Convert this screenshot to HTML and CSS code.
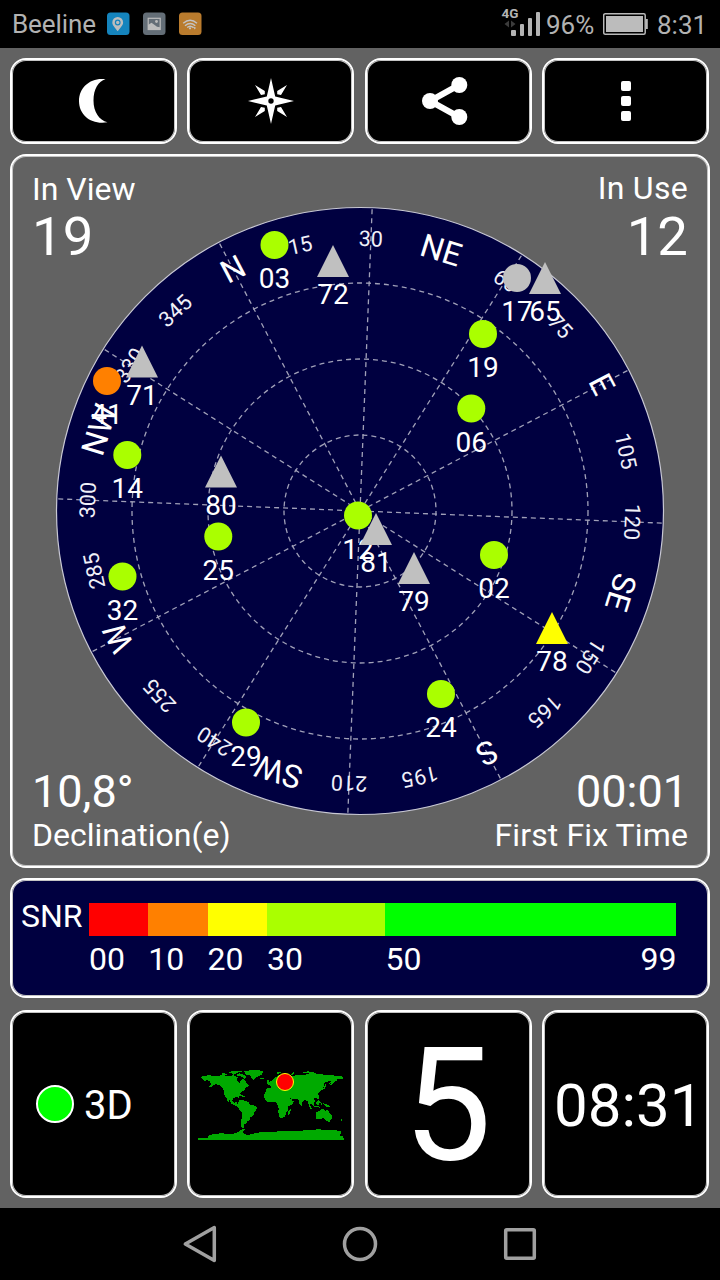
FILE: index.html
```html
<!DOCTYPE html>
<html lang="en">
<head>
<meta charset="utf-8">
<title>GPS Status</title>
<link rel="stylesheet" href="styles.css">
</head>
<body>
<div class="screen">
  <header class="status">
    <span class="carrier">Beeline</span>
    <svg class="notifs" width="96" height="24" viewBox="106 12 96 24">
      <rect x="107" y="12.500" width="22.500" height="22.500" rx="3.500" fill="#1584bd"/>
      <path fill-rule="evenodd" fill="#bdbdbd" d="M117.700 17a5.400 5.400 0 0 0-5.400 5.400c0 3.200 3.300 5.500 5.400 8.900 2.100-3.400 5.400-5.700 5.400-8.900a5.400 5.400 0 0 0-5.400-5.400zm0 2.600a2.900 2.900 0 1 1 0 5.800 2.900 2.900 0 0 1 0-5.800z"/>
      <circle cx="117.700" cy="22.500" r="1.700" fill="#bdbdbd"/>
      <rect x="143" y="12.500" width="22.500" height="22.500" rx="3.500" fill="#646e77"/>
      <rect x="148.200" y="18.300" width="12" height="11.200" fill="none" stroke="#bdbdbd" stroke-width="1.200"/>
      <path fill="#bdbdbd" d="M148 25l3.500-2.200 3.500 2.400 2 1.500 3 .5v2.600h-12z"/>
      <circle cx="156.500" cy="21.500" r="1.400" fill="#bdbdbd"/>
      <rect x="179" y="12.500" width="22.500" height="22.500" rx="3.500" fill="#b97b2d"/>
      <g fill="none" stroke="#c4c4c4" stroke-width="1.400">
        <path d="M183.200 23.200q7-6 13.800 0M185 25.800q5.200-4.500 10.300 0M187.200 27.500q3-2.700 6 0"/>
      </g>
      <circle cx="190" cy="28.300" r="1.100" fill="#c4c4c4"/>
      <path d="M192.500 27l3 1-1.500 1" stroke="#c4c4c4" fill="none"/>
    </svg>
    <svg class="signal" width="40" height="34" viewBox="501 4 40 34">
      <text class="net" x="501.500" y="18">4G</text>
      <path fill="#3c3c3c" d="M509 20.500v7l-4.500-3.500zM511 20.500v7l4.500-3.500z"/>
      <g fill="#b4b4b4">
        <rect x="511" y="30" width="5" height="6" rx="1"/>
        <rect x="520" y="24" width="4" height="12" rx="1"/>
        <rect x="528" y="18" width="4" height="18" rx="1"/>
        <rect x="536" y="12" width="4" height="24" rx="1"/>
      </g>
    </svg>
    <span class="percent">96%</span>
    <svg class="battery" width="46" height="24" viewBox="603 12 46 24">
      <rect x="603.700" y="13.700" width="41.500" height="20.500" rx="1.500" fill="none" stroke="#b9b9b9" stroke-width="1.500"/>
      <rect x="606" y="16" width="37" height="16" fill="#bcbcbc"/>
      <path fill="#b9b9b9" d="M646 19h1.800v10H646z"/>
    </svg>
    <span class="clock">8:31</span>
  </header>

  <main class="app">
    <nav class="row toolbar">
      <button class="card" aria-label="Night mode">
        <svg class="nudge" width="30" height="46" viewBox="78 78 30 46"><path fill="#fff" d="M105.500 79.200C91 77 79 87 79 101s12 24 28.500 21.300C99 120 93.500 112 93.500 100.500S98.500 81 105.500 79.200z"/></svg>
      </button>
      <button class="card" aria-label="Compass">
        <svg width="48" height="48" viewBox="247 77 48 48">
          <path fill="#fff" d="M271 78l4.200 18.500L294 101l-18.800 4.500L271 124l-4.200-18.500L248 101l18.800-4.500z"/>
          <path fill="#fff" d="M255 85l9.800 6v3.300l-3.800.7zM287 85l-9.800 6v3.300l3.800.7zM255 117l9.800-6v-3.300l-3.800-.7zM287 117l-9.800-6v-3.300l3.800-.7z"/>
          <circle cx="271" cy="101" r="2.700"/>
        </svg>
      </button>
      <button class="card" aria-label="Share">
        <svg class="share" width="48" height="50" viewBox="422 76 48 50"><path d="M460 85l-29 16 29 16" fill="none" stroke="#fff" stroke-width="6"/><g fill="#fff"><circle cx="431" cy="101" r="8"/><circle cx="460.300" cy="85" r="8"/><circle cx="460.300" cy="117" r="8"/></g></svg>
      </button>
      <button class="card" aria-label="Menu">
        <svg width="12" height="42" viewBox="0 0 12 42"><g fill="#fff"><rect x="1" y="1" width="10" height="10" rx="2"/><rect x="1" y="16" width="10" height="10" rx="2"/><rect x="1" y="31" width="10" height="10" rx="2"/></g></svg>
      </button>
    </nav>

    <section class="card sky">
      <svg class="dial" viewBox="13 157 694 708">
        <circle cx="360" cy="511" r="303.500" fill="#000040" stroke="#c8c8d4" stroke-width="1.200"/>
        <g id="grid" class="grid">
          <circle cx="360" cy="511" r="76"/><circle cx="360" cy="511" r="152"/><circle cx="360" cy="511" r="228"/>
        </g>
        <g id="bearings" class="bearings"></g>
        <g id="sats" class="sats"></g>
      </svg>
      <div class="corners">
        <div class="pair"><div><p class="label">In View</p><p class="count">19</p></div><div class="right"><p class="label up">In Use</p><p class="count in-use">12</p></div></div>
        <div class="pair"><div><p class="value">10,8°</p><p class="label">Declination(e)</p></div><div class="right"><p class="value">00:01</p><p class="label ttff">First Fix Time</p></div></div>
      </div>
    </section>

    <section class="card snr">
      <span class="snr-name">SNR</span>
      <div class="scale">
        <i class="red"></i><i class="orange"></i><i class="yellow"></i><i class="lime"></i><i class="green"></i>
        <span>00</span><span>10</span><span>20</span><span>30</span><span class="ends"><b>50</b><b>99</b></span>
      </div>
    </section>

    <section class="row tiles">
      <div class="card fix"><i class="dot"></i><span>3D</span></div>
      <div class="card world">
        <svg class="map" width="146" height="72" viewBox="39 57 438 216">
          <g fill="#00aa00" shape-rendering="crispEdges">
            <path d="M39 75l6 6 12-3 12-2 30 2 12-3 18 3 18-2 12 6-4 9 8 8 9-13 9 4 3 9 10 8-10 5-7 9-11 8-5 10 2 8-5-5-13 1-3 9 6 6 8-3 1 7 6 3 2 6 8 3-6 2-12-7-15-7-8-13-2 8-6-13-6-10-1-12-7-12-9-6-11-1-12 8-6-1 8-7-6-5 2-6-12-1-7 2z"/>
            <path d="M111 70l18 1-4 5-14-1zM132 65l20-2 24 0-18 5-12 7-5-5-9 0zM156 73l9-3 12 5 8 6-7 5-10-7-12-2zM177 64l24-4 24 1 9 4-4 9-14 7-10 8-6-3-4-10-14-3zM225 83l14 0-4 5-9-1z"/>
            <path d="M153 128l18 7 10 5-10 0-17-7zM162 152l8-3 12 4 8 3 7 9 13 2 6 6-3 7-6 6-1 9-10 7-3 10-6 1-3 8-6 2-2 11-9-3 1-17 4-15 0-10-9-9-5-13z"/>
            <path d="M243 123l3-9 12-1 0-6-9-2 5-9 10-7 8-7 8-7 14-3 14 4-4 8 16-4 16-5 21 0 18-6 24 2 18 3 18 1 24 3 15 2v7l-16-1-4 7-7 3-6 9-5-1 5-11-12 1-13 6 1 9-9 12-9 8 3 11-14 5 1 9-4 10-8-8-1 12 6 9-4 2-6-12-3-12-9-6-8 8-3 12-6-8-3-12-10-2-11 0-6-4-3 6 8 6 9-1-4 8-12 6-4-2-10-16-1-9-13 2-8-4-9-2-15 3z"/>
            <path d="M244 123l10-6 12-1 4 6 12 2 15-1 8 4 7 16 4 5 7 1-7 12-7 9 0 12-5 5-4 12-9 5-7-1-4-16 1-12-5-13-4-6-12 0-11 1-8-8-4-8 1-9zM311 181l6-4-1 12-5 6-4-6zM247 103l-2-9 5-5 5 8 1 8zM274 68l12-2 4 3-12 2zM317 73l9-6 3 2-7 6zM350 67l18-3 22 4-18 2z"/>
            <path d="M392 188l10-5 7-5 9 0 2 5 6-6 8 12 6 8 0 8-5 7-9 1-9-8-12 1-10 2-3-8zM428 212h6v4h-6zM372 149l16 15-2 4-12-11zM388 168l18 2v3l-18-2zM392 157l9-7 4 5-4 9-8-1zM406 157l3 8 5 1-5-8zM415 160l13 4 10 8-15-2zM393 137l4 9 7 5-3-11zM408 118l10-6 1-9 5-1-3 12-10 7zM437 94h5l-8 8h-4zM466 206l6 3-4 6zM460 216l6-2-4 4z"/>
            <path d="M39 264h30v-6l12-5 26-3 35 2 16-5 9-8 13-2-5 8 1 7 12 3 18-4 28-6 36 0 40-3 32 1 23-3 37-2 42 3 22 1 2 7-6 7 12 2v6h30v6H39z"/>
          </g>
          <circle cx="300" cy="96" r="25.500" fill="#f00" stroke="#ff0" stroke-width="3"/>
        </svg>
      </div>
      <div class="card five">5</div>
      <div class="card hour">08:31</div>
    </section>
  </main>

  <footer class="navbar">
    <svg width="36" height="40" viewBox="182 1224 36 40"><path d="M214.300 1227.500v33L185.300 1244z" fill="none" stroke="#a0a0a0" stroke-width="3.500" stroke-linejoin="round"/></svg>
    <svg width="36" height="40" viewBox="342 1224 36 40"><circle cx="360" cy="1244" r="15.500" fill="none" stroke="#a0a0a0" stroke-width="3.500"/></svg>
    <svg width="36" height="40" viewBox="502 1224 36 40"><rect x="505.700" y="1229.700" width="28.600" height="28.600" rx="1" fill="none" stroke="#a0a0a0" stroke-width="3.500"/></svg>
  </footer>
</div>
<script src="dial.js"></script>
</body>
</html>
```
FILE: styles.css
```css
* { box-sizing: border-box; }
body { margin: 0; background: #000; font-family: Roboto, "Liberation Sans", sans-serif; color: #fff; }
p { margin: 0; }
i { display: block; }
.screen { width: 720px; height: 1280px; display: flex; flex-direction: column; overflow: hidden; }

.status { height: 48px; background: #000; color: #b2b2b2; font-size: 26px; line-height: 48px; display: flex; align-items: center; padding: 0 13px 0 12px; }
.carrier { width: 94px; letter-spacing: -.1px; }
.signal { margin-left: auto; margin-top: -6px; }
.net { font: bold 13.500px/1 Roboto, sans-serif; fill: #b4b4b4; }
.percent { width: 57px; margin-left: 5px; padding-top: 2px; }
.battery { margin-right: 8px; }
.clock { width: 50px; padding-top: 2px; }

.app { height: 1160px; background: #626262; padding: 10px; display: flex; flex-direction: column; gap: 10px; }
.row { display: grid; grid-template-columns: repeat(4, 167px); column-gap: 10.450px; }
.card { border: 2px solid #fff; box-shadow: inset 0 0 0 1px #c4c4c4; border-radius: 16px; background: #000; color: #fff; font-family: inherit; padding: 0; display: flex; align-items: center; justify-content: center; min-width: 0; overflow: hidden; }
.toolbar { height: 86px; }
.nudge { margin-right: 2px; }
.share { margin-right: 6px; }

.sky { height: 714px; background: #626262; display: grid; grid-template: 708px / 694px; padding: 1px; }
.dial, .corners { grid-area: 1 / 1; width: 694px; height: 708px; }
.corners { z-index: 1; padding: 14px 19px 11px; display: flex; flex-direction: column; justify-content: space-between; }
.pair { display: flex; justify-content: space-between; }
.right { text-align: right; }
.label { font-size: 32px; line-height: 37px; }
.up { margin-top: -1px; margin-bottom: 1px; letter-spacing: .3px; }
.ttff { letter-spacing: .12px; }
.count { font-size: 54.500px; line-height: 56px; }
.value { font-size: 45px; line-height: 50px; }

.grid { fill: none; stroke: #a0a0b8; stroke-width: 1.3; stroke-dasharray: 5 4; }
.bearings { fill: #f0f0f8; text-anchor: middle; font-size: 21.500px; }
.bearings .major { font-size: 32px; fill: #fff; }
.sats text { font-size: 28px; text-anchor: middle; fill: #fff; }

.snr { height: 120px; background: #000040; justify-content: flex-start; align-items: flex-start; padding: 23px 0 0 9px; }
.snr-name { width: 68px; font-size: 32px; line-height: 26px; }
.scale { display: grid; grid-template-columns: 59.300px 59.300px 59.300px 118.600px 291px; grid-template-rows: 33px 46px; font-size: 32px; line-height: 46px; }
.red { background: #f00; }
.orange { background: #ff8000; }
.yellow { background: #ff0; }
.lime { background: #af0; }
.green { background: #0f0; }
.ends { display: flex; justify-content: space-between; }
.ends b { font-weight: normal; }

.tiles { height: 188px; margin-top: 2px; }
.fix { justify-content: flex-start; padding-left: 24px; gap: 10px; font-size: 40px; }
.fix span { padding-top: 2px; }
.dot { width: 38px; height: 38px; border-radius: 50%; background: #0f0; border: 2px solid #fff; }
.world { padding-top: 1px; }
.five { font-size: 158px; line-height: 182px; padding: 2px 2px 0 0; }
.hour { font-size: 60px; padding: 2px 0 0 6px; }

.navbar { height: 72px; background: #000; display: flex; justify-content: center; align-items: center; gap: 124px; }
```
FILE: dial.js
```js
const NS = "http://www.w3.org/2000/svg";
const CX = 360, CY = 511, HEADING = -27.7;

function add(parent, tag, attrs, text) {
  const el = document.createElementNS(NS, tag);
  for (const key in attrs) el.setAttribute(key, attrs[key]);
  if (text) el.textContent = text;
  document.getElementById(parent).appendChild(el);
}

const names = { 0: "N", 45: "NE", 90: "E", 135: "SE", 180: "S", 225: "SW", 270: "W", 315: "NW" };
for (let deg = 0; deg < 360; deg += 15) {
  const transform = `rotate(${deg + HEADING} ${CX} ${CY})`;
  if (deg % 30 === 0) add("grid", "line", { x1: CX, y1: CY, x2: CX, y2: CY - 302, transform });
  const name = names[deg];
  add("bearings", "text", { x: CX, y: CY - (name ? 262 : 265), transform, class: name ? "major" : "minor" }, name || String(deg));
}

const lime = "#af0", gray = "#c0c0c0";
const satellites = [
  ["02", 494, 555, lime], ["03", 274.5, 245, lime], ["06", 471.3, 408.5, lime],
  ["12", 358, 515.5, lime], ["14", 127.3, 455, lime], ["17", 517, 278, gray],
  ["19", 483, 334, lime], ["24", 441, 694, lime], ["25", 218.3, 536.5, lime],
  ["29", 246, 722.5, lime], ["32", 122.5, 576.5, lime], ["41", 107, 381, "#ff8000"],
  ["65", 545, 278, gray], ["71", 142, 361.5, gray], ["72", 333, 261, gray],
  ["78", 552, 628, "#ff0"], ["79", 414, 568, gray], ["80", 221, 471.5, gray],
  ["81", 376, 529, gray]
];
for (const [id, x, y, fill] of satellites) {
  if (Number(id) < 65) add("sats", "circle", { cx: x, cy: y, r: 14, fill });
  else add("sats", "path", { d: `M${x} ${y - 16}l16 32h-32z`, fill });
  add("sats", "text", { x, y: y + 43 }, id);
}
```
